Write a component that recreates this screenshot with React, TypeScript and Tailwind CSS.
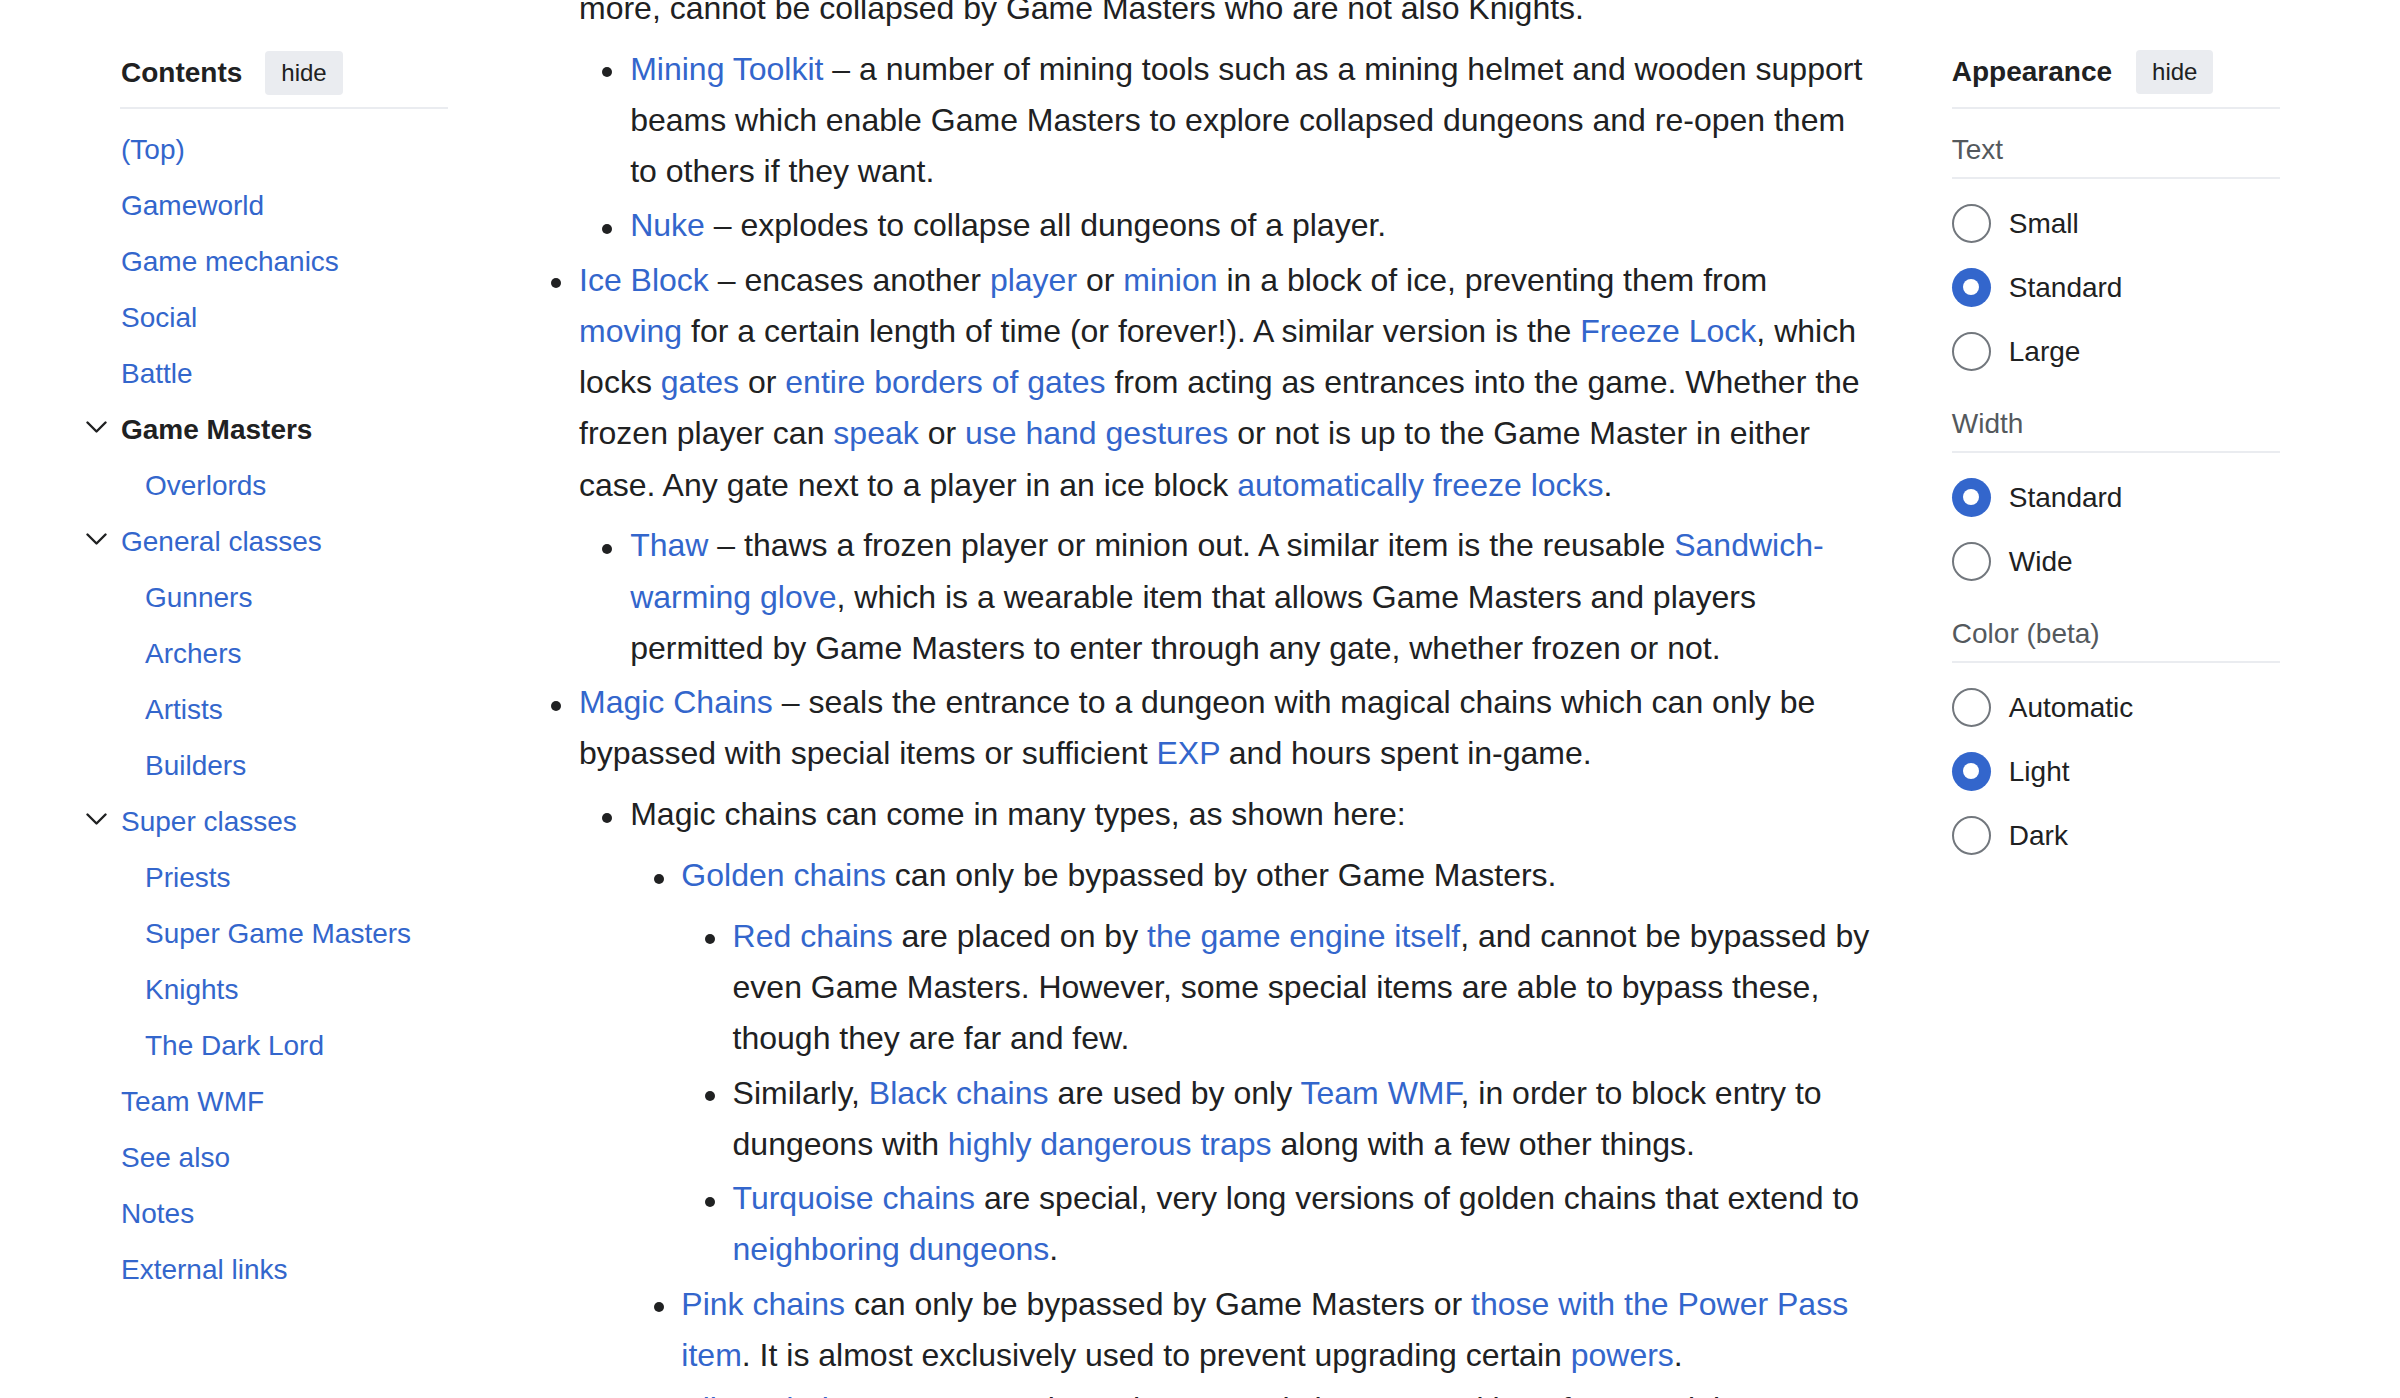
import React from "react";

const A = ({ children }: { children: React.ReactNode }) => (
  <a href="#" className="text-[#3366cc] no-underline">
    {children}
  </a>
);

function Li({
  children,
  nested,
  bullet = true,
}: {
  children: React.ReactNode;
  nested?: React.ReactNode;
  bullet?: boolean;
}) {
  return (
    <li className="flex mb-[3.2px] last:mb-0">
      <span className="w-[51.2px] shrink-0 pl-[23.5px] pt-[23.7px]">
        {bullet && <span className="block h-[10px] w-[10px] rounded-full bg-[#202122]" />}
      </span>
      <div className="min-w-0 flex-1">
        <div>{children}</div>
        {nested}
      </div>
    </li>
  );
}

function SubUl({ children }: { children: React.ReactNode }) {
  return <ul className="mt-[9.6px]">{children}</ul>;
}

function Chevron() {
  return (
    <span className="-ml-[35px] mb-[7px] flex w-[35px] shrink-0 items-center">
      <svg width="21" height="12" viewBox="0 0 21 12">
        <polyline
          points="1.5,1.5 10.5,10.5 19.5,1.5"
          fill="none"
          stroke="#202122"
          strokeWidth="2.4"
          strokeLinecap="round"
          strokeLinejoin="round"
        />
      </svg>
    </span>
  );
}

function TocItem({
  label,
  sub,
  chevron,
  active,
}: {
  label: string;
  sub?: boolean;
  chevron?: boolean;
  active?: boolean;
}) {
  return (
    <li className={sub ? "flex h-[56px] items-center pl-[24px]" : "flex h-[56px] items-center"}>
      {chevron && <Chevron />}
      <a href="#" className={active ? "font-bold text-[#202122]" : "text-[#3366cc]"}>
        {label}
      </a>
    </li>
  );
}

function HideButton() {
  return (
    <button className="flex h-[44px] items-center rounded-[4px] bg-[#eaecf0] px-[16px] text-[24px] leading-none text-[#202122]">
      hide
    </button>
  );
}

function Radio({ label, checked }: { label: string; checked?: boolean }) {
  return (
    <div className="flex h-[64px] items-center">
      {checked ? (
        <span className="flex h-[39px] w-[39px] shrink-0 items-center justify-center rounded-full bg-[#3366cc]">
          <span className="h-[16px] w-[16px] rounded-full bg-white" />
        </span>
      ) : (
        <span className="h-[39px] w-[39px] shrink-0 rounded-full border-2 border-[#72777d] bg-white" />
      )}
      <span className="ml-[18px] text-[28px] leading-[31px] text-[#202122]">{label}</span>
    </div>
  );
}

function Section({ title, first, children }: { title: string; first?: boolean; children: React.ReactNode }) {
  return (
    <div className={first ? "mt-[25px]" : "mt-[24.7px]"}>
      <div className="text-[28px] leading-[31.3px] text-[#54595d]">{title}</div>
      <div className="mt-[12px] h-[2px] bg-[#eaecf0]" />
      <div className="mt-[12px]">{children}</div>
    </div>
  );
}

export default function App() {
  return (
    <div className="h-[1398px] w-[2400px] overflow-hidden bg-white font-['Liberation_Sans',Arial,Helvetica,sans-serif] text-[#202122]">
      <div className="flex items-start">
        {/* Left: Contents */}
        <nav className="w-[527.8px] shrink-0 pl-[120px] pt-[51px]">
          <div className="w-[328px]">
            <div className="flex h-[44px] items-center pl-[1px]">
              <span className="text-[28px] font-bold leading-none">Contents</span>
              <span className="ml-[23px]">
                <HideButton />
              </span>
            </div>
            <div className="mt-[12px] h-[2px] bg-[#eaecf0]" />
            <ul className="mt-[13.2px] pl-[1px] text-[28px] leading-normal">
              <TocItem label="(Top)" />
              <TocItem label="Gameworld" />
              <TocItem label="Game mechanics" />
              <TocItem label="Social" />
              <TocItem label="Battle" />
              <TocItem label="Game Masters" chevron active />
              <TocItem label="Overlords" sub />
              <TocItem label="General classes" chevron />
              <TocItem label="Gunners" sub />
              <TocItem label="Archers" sub />
              <TocItem label="Artists" sub />
              <TocItem label="Builders" sub />
              <TocItem label="Super classes" chevron />
              <TocItem label="Priests" sub />
              <TocItem label="Super Game Masters" sub />
              <TocItem label="Knights" sub />
              <TocItem label="The Dark Lord" sub />
              <TocItem label="Team WMF" />
              <TocItem label="See also" />
              <TocItem label="Notes" />
              <TocItem label="External links" />
            </ul>
          </div>
        </nav>

        {/* Main content */}
        <main className="-mt-[17.2px] w-[1372px] shrink-0 text-[32px] leading-[51.2px] text-[#202122]">
          <ul>
            <Li
              bullet={false}
              nested={
                <SubUl>
                  <Li>
                    <A>Mining Toolkit</A> – a number of mining tools such as a mining helmet and wooden support
                    <br />
                    beams which enable Game Masters to explore collapsed dungeons and re-open them
                    <br />
                    to others if they want.
                  </Li>
                  <Li>
                    <A>Nuke</A> – explodes to collapse all dungeons of a player.
                  </Li>
                </SubUl>
              }
            >
              more, cannot be collapsed by Game Masters who are not also Knights.
            </Li>
            <Li
              nested={
                <SubUl>
                  <Li>
                    <A>Thaw</A> – thaws a frozen player or minion out. A similar item is the reusable{" "}
                    <A>
                      Sandwich-
                      <br />
                      warming glove
                    </A>
                    , which is a wearable item that allows Game Masters and players
                    <br />
                    permitted by Game Masters to enter through any gate, whether frozen or not.
                  </Li>
                </SubUl>
              }
            >
              <A>Ice Block</A> – encases another <A>player</A> or <A>minion</A> in a block of ice, preventing them from
              <br />
              <A>moving</A> for a certain length of time (or forever!). A similar version is the <A>Freeze Lock</A>, which
              <br />
              locks <A>gates</A> or <A>entire borders of gates</A> from acting as entrances into the game. Whether the
              <br />
              frozen player can <A>speak</A> or <A>use hand gestures</A> or not is up to the Game Master in either
              <br />
              case. Any gate next to a player in an ice block <A>automatically freeze locks</A>.
            </Li>
            <Li
              nested={
                <SubUl>
                  <Li
                    nested={
                      <SubUl>
                        <Li
                          nested={
                            <SubUl>
                              <Li>
                                <A>Red chains</A> are placed on by <A>the game engine itself</A>, and cannot be bypassed by
                                <br />
                                even Game Masters. However, some special items are able to bypass these,
                                <br />
                                though they are far and few.
                              </Li>
                              <Li>
                                Similarly, <A>Black chains</A> are used by only <A>Team WMF</A>, in order to block entry to
                                <br />
                                dungeons with <A>highly dangerous traps</A> along with a few other things.
                              </Li>
                              <Li>
                                <A>Turquoise chains</A> are special, very long versions of golden chains that extend to
                                <br />
                                <A>neighboring dungeons</A>.
                              </Li>
                            </SubUl>
                          }
                        >
                          <A>Golden chains</A> can only be bypassed by other Game Masters.
                        </Li>
                        <Li>
                          <A>Pink chains</A> can only be bypassed by Game Masters or{" "}
                          <A>
                            those with the Power Pass
                            <br />
                            item
                          </A>
                          . It is almost exclusively used to prevent upgrading certain <A>powers</A>.
                        </Li>
                        <Li>
                          <A>Silver chains</A> are rarer variants that can only be removed by a few special modifications.
                        </Li>
                      </SubUl>
                    }
                  >
                    Magic chains can come in many types, as shown here:
                  </Li>
                </SubUl>
              }
            >
              <A>Magic Chains</A> – seals the entrance to a dungeon with magical chains which can only be
              <br />
              bypassed with special items or sufficient <A>EXP</A> and hours spent in-game.
            </Li>
          </ul>
        </main>

        {/* Right: Appearance */}
        <aside className="ml-[52px] w-[328px] shrink-0 pt-[50px]">
          <div className="flex h-[44px] items-center">
            <span className="text-[28px] font-bold leading-none">Appearance</span>
            <span className="ml-[24px]">
              <HideButton />
            </span>
          </div>
          <div className="mt-[13px] h-[2px] bg-[#eaecf0]" />
          <Section title="Text" first>
            <Radio label="Small" />
            <Radio label="Standard" checked />
            <Radio label="Large" />
          </Section>
          <Section title="Width">
            <Radio label="Standard" checked />
            <Radio label="Wide" />
          </Section>
          <Section title="Color (beta)">
            <Radio label="Automatic" />
            <Radio label="Light" checked />
            <Radio label="Dark" />
          </Section>
        </aside>
      </div>
    </div>
  );
}
